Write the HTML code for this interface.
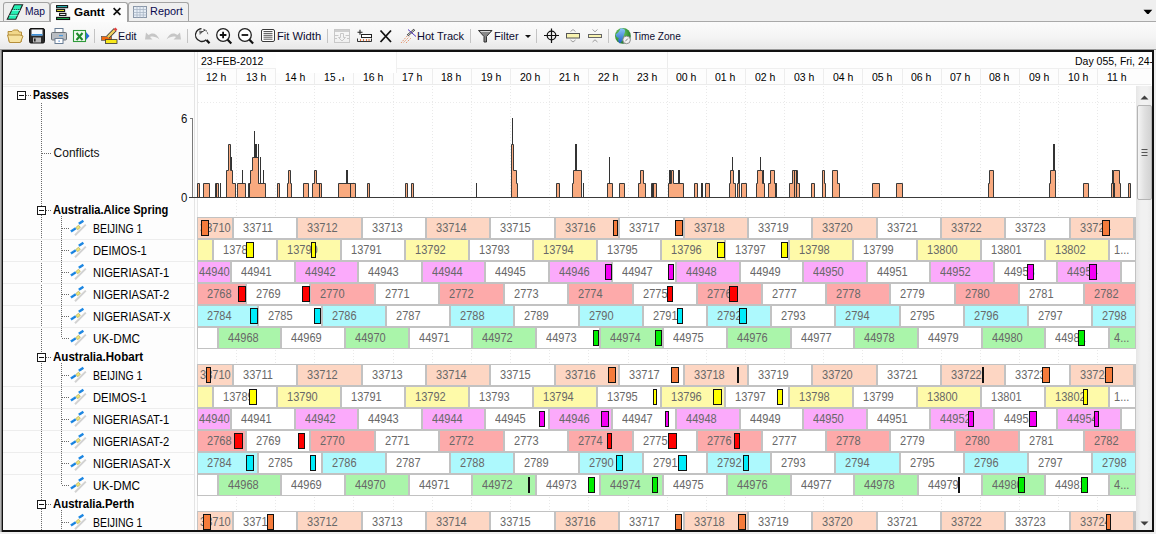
<!DOCTYPE html><html><head><meta charset="utf-8"><style>
html,body{margin:0;padding:0;}
body{width:1156px;height:534px;position:relative;overflow:hidden;background:#ececec;font-family:"Liberation Sans",sans-serif;}
.t{position:absolute;white-space:nowrap;line-height:1;}
svg{position:absolute;left:0;top:0;}
.sg{position:absolute;box-sizing:border-box;border:1px solid #c2c2c2;height:22px;overflow:hidden;}
.sg span{position:absolute;top:3px;font-size:12.6px;color:#686868;line-height:15px;white-space:nowrap;transform:scaleX(0.875);transform-origin:0 0;}
.mk{position:absolute;box-sizing:border-box;border:1.5px solid #111;height:16px;}
</style></head><body>
<div style="position:absolute;left:0px;top:0px;width:1156px;height:21px;background:#efefef;"></div>
<div style="position:absolute;left:0px;top:21px;width:1156px;height:1px;background:#a9a9a9;"></div>
<div style="position:absolute;left:3px;top:2px;width:47px;height:19px;box-sizing:border-box;border:1px solid #a3a3a3;border-bottom:none;border-radius:3px 3px 0 0;background:#efefef;"></div>
<div style="position:absolute;left:128px;top:2px;width:61px;height:19px;box-sizing:border-box;border:1px solid #a3a3a3;border-bottom:none;border-radius:3px 3px 0 0;background:#efefef;"></div>
<div style="position:absolute;left:50px;top:2px;width:78px;height:20px;box-sizing:border-box;border:1px solid #a3a3a3;border-bottom:none;border-radius:3px 3px 0 0;background:#fcfcfc;"></div>
<div style="position:absolute;left:0px;top:22px;width:1156px;height:26px;background:linear-gradient(#fbfbfb,#f4f4f4 60%,#e9e9e9);"></div>
<div style="position:absolute;left:0px;top:48px;width:1156px;height:1px;background:#ececec;"></div>
<div style="position:absolute;left:0px;top:49px;width:1156px;height:1px;background:#9a9a9a;"></div>
<div style="position:absolute;left:0px;top:50px;width:1156px;height:484px;background:#efefef;"></div>
<div style="position:absolute;left:2px;top:50px;width:1152px;height:482px;background:#fdfdfd;"></div>
<div style="position:absolute;left:3px;top:52px;width:191px;height:32px;background:#fbfbfb;"></div>
<div style="position:absolute;left:3px;top:84px;width:191px;height:1px;background:#ececec;"></div>
<div style="position:absolute;left:3px;top:86px;width:191px;height:1px;background:#efefef;"></div>
<div style="position:absolute;left:194px;top:52px;width:1px;height:480px;background:#e4e4e4;"></div>
<div style="position:absolute;left:197px;top:52px;width:1px;height:480px;background:#e8e8e8;"></div>
<div style="position:absolute;left:198px;top:52px;width:953px;height:16px;background:#fefefe;"></div>
<div style="position:absolute;left:198px;top:68px;width:953px;height:1px;background:#efefef;"></div>
<div style="position:absolute;left:198px;top:84px;width:953px;height:1px;background:#ebebeb;"></div>
<div style="position:absolute;left:198px;top:85px;width:938px;height:446px;background:#ffffff;"></div>
<div style="position:absolute;left:236px;top:86px;width:1px;height:445px;background:repeating-linear-gradient(#e9e9e9 0 1px,transparent 1px 3px)"></div>
<div style="position:absolute;left:275px;top:86px;width:1px;height:445px;background:repeating-linear-gradient(#e9e9e9 0 1px,transparent 1px 3px)"></div>
<div style="position:absolute;left:314px;top:86px;width:1px;height:445px;background:repeating-linear-gradient(#e9e9e9 0 1px,transparent 1px 3px)"></div>
<div style="position:absolute;left:353px;top:86px;width:1px;height:445px;background:repeating-linear-gradient(#e9e9e9 0 1px,transparent 1px 3px)"></div>
<div style="position:absolute;left:393px;top:86px;width:1px;height:445px;background:repeating-linear-gradient(#e9e9e9 0 1px,transparent 1px 3px)"></div>
<div style="position:absolute;left:432px;top:86px;width:1px;height:445px;background:repeating-linear-gradient(#e9e9e9 0 1px,transparent 1px 3px)"></div>
<div style="position:absolute;left:471px;top:86px;width:1px;height:445px;background:repeating-linear-gradient(#e9e9e9 0 1px,transparent 1px 3px)"></div>
<div style="position:absolute;left:510px;top:86px;width:1px;height:445px;background:repeating-linear-gradient(#e9e9e9 0 1px,transparent 1px 3px)"></div>
<div style="position:absolute;left:549px;top:86px;width:1px;height:445px;background:repeating-linear-gradient(#e9e9e9 0 1px,transparent 1px 3px)"></div>
<div style="position:absolute;left:588px;top:86px;width:1px;height:445px;background:repeating-linear-gradient(#e9e9e9 0 1px,transparent 1px 3px)"></div>
<div style="position:absolute;left:628px;top:86px;width:1px;height:445px;background:repeating-linear-gradient(#e9e9e9 0 1px,transparent 1px 3px)"></div>
<div style="position:absolute;left:667px;top:86px;width:1px;height:445px;background:repeating-linear-gradient(#e9e9e9 0 1px,transparent 1px 3px)"></div>
<div style="position:absolute;left:706px;top:86px;width:1px;height:445px;background:repeating-linear-gradient(#e9e9e9 0 1px,transparent 1px 3px)"></div>
<div style="position:absolute;left:745px;top:86px;width:1px;height:445px;background:repeating-linear-gradient(#e9e9e9 0 1px,transparent 1px 3px)"></div>
<div style="position:absolute;left:784px;top:86px;width:1px;height:445px;background:repeating-linear-gradient(#e9e9e9 0 1px,transparent 1px 3px)"></div>
<div style="position:absolute;left:823px;top:86px;width:1px;height:445px;background:repeating-linear-gradient(#e9e9e9 0 1px,transparent 1px 3px)"></div>
<div style="position:absolute;left:862px;top:86px;width:1px;height:445px;background:repeating-linear-gradient(#e9e9e9 0 1px,transparent 1px 3px)"></div>
<div style="position:absolute;left:902px;top:86px;width:1px;height:445px;background:repeating-linear-gradient(#e9e9e9 0 1px,transparent 1px 3px)"></div>
<div style="position:absolute;left:941px;top:86px;width:1px;height:445px;background:repeating-linear-gradient(#e9e9e9 0 1px,transparent 1px 3px)"></div>
<div style="position:absolute;left:980px;top:86px;width:1px;height:445px;background:repeating-linear-gradient(#e9e9e9 0 1px,transparent 1px 3px)"></div>
<div style="position:absolute;left:1019px;top:86px;width:1px;height:445px;background:repeating-linear-gradient(#e9e9e9 0 1px,transparent 1px 3px)"></div>
<div style="position:absolute;left:1058px;top:86px;width:1px;height:445px;background:repeating-linear-gradient(#e9e9e9 0 1px,transparent 1px 3px)"></div>
<div style="position:absolute;left:1097px;top:86px;width:1px;height:445px;background:repeating-linear-gradient(#e9e9e9 0 1px,transparent 1px 3px)"></div>
<div style="position:absolute;left:198px;top:102px;width:938px;height:1px;background:repeating-linear-gradient(90deg,#ebebeb 0 1px,transparent 1px 3px)"></div>
<div style="position:absolute;left:198px;top:52px;width:954px;height:33px;overflow:hidden">
<div class="t" style="left:8.45px;top:20.01px;font-size:10.6px;color:#000;font-weight:400;transform:scaleX(0.990);transform-origin:0 0;">12 h</div>
<div style="position:absolute;left:38px;top:17px;width:1px;height:15px;background:#ededed;"></div>
<div class="t" style="left:47.60px;top:20.01px;font-size:10.6px;color:#000;font-weight:400;transform:scaleX(0.990);transform-origin:0 0;">13 h</div>
<div style="position:absolute;left:77px;top:17px;width:1px;height:15px;background:#ededed;"></div>
<div class="t" style="left:86.75px;top:20.01px;font-size:10.6px;color:#000;font-weight:400;transform:scaleX(0.990);transform-origin:0 0;">14 h</div>
<div style="position:absolute;left:116px;top:17px;width:1px;height:15px;background:#ededed;"></div>
<div class="t" style="left:125.90px;top:20.01px;font-size:10.6px;color:#000;font-weight:400;transform:scaleX(0.990);transform-origin:0 0;">15 h</div>
<div style="position:absolute;left:155px;top:17px;width:1px;height:15px;background:#ededed;"></div>
<div class="t" style="left:165.05px;top:20.01px;font-size:10.6px;color:#000;font-weight:400;transform:scaleX(0.990);transform-origin:0 0;">16 h</div>
<div style="position:absolute;left:195px;top:17px;width:1px;height:15px;background:#ededed;"></div>
<div class="t" style="left:204.20px;top:20.01px;font-size:10.6px;color:#000;font-weight:400;transform:scaleX(0.990);transform-origin:0 0;">17 h</div>
<div style="position:absolute;left:234px;top:17px;width:1px;height:15px;background:#ededed;"></div>
<div class="t" style="left:243.35px;top:20.01px;font-size:10.6px;color:#000;font-weight:400;transform:scaleX(0.990);transform-origin:0 0;">18 h</div>
<div style="position:absolute;left:273px;top:17px;width:1px;height:15px;background:#ededed;"></div>
<div class="t" style="left:282.50px;top:20.01px;font-size:10.6px;color:#000;font-weight:400;transform:scaleX(0.990);transform-origin:0 0;">19 h</div>
<div style="position:absolute;left:312px;top:17px;width:1px;height:15px;background:#ededed;"></div>
<div class="t" style="left:321.65px;top:20.01px;font-size:10.6px;color:#000;font-weight:400;transform:scaleX(0.990);transform-origin:0 0;">20 h</div>
<div style="position:absolute;left:351px;top:17px;width:1px;height:15px;background:#ededed;"></div>
<div class="t" style="left:360.80px;top:20.01px;font-size:10.6px;color:#000;font-weight:400;transform:scaleX(0.990);transform-origin:0 0;">21 h</div>
<div style="position:absolute;left:390px;top:17px;width:1px;height:15px;background:#ededed;"></div>
<div class="t" style="left:399.95px;top:20.01px;font-size:10.6px;color:#000;font-weight:400;transform:scaleX(0.990);transform-origin:0 0;">22 h</div>
<div style="position:absolute;left:430px;top:17px;width:1px;height:15px;background:#ededed;"></div>
<div class="t" style="left:439.10px;top:20.01px;font-size:10.6px;color:#000;font-weight:400;transform:scaleX(0.990);transform-origin:0 0;">23 h</div>
<div style="position:absolute;left:469px;top:17px;width:1px;height:15px;background:#ededed;"></div>
<div class="t" style="left:478.25px;top:20.01px;font-size:10.6px;color:#000;font-weight:400;transform:scaleX(0.990);transform-origin:0 0;">00 h</div>
<div style="position:absolute;left:508px;top:17px;width:1px;height:15px;background:#ededed;"></div>
<div class="t" style="left:517.40px;top:20.01px;font-size:10.6px;color:#000;font-weight:400;transform:scaleX(0.990);transform-origin:0 0;">01 h</div>
<div style="position:absolute;left:547px;top:17px;width:1px;height:15px;background:#ededed;"></div>
<div class="t" style="left:556.55px;top:20.01px;font-size:10.6px;color:#000;font-weight:400;transform:scaleX(0.990);transform-origin:0 0;">02 h</div>
<div style="position:absolute;left:586px;top:17px;width:1px;height:15px;background:#ededed;"></div>
<div class="t" style="left:595.70px;top:20.01px;font-size:10.6px;color:#000;font-weight:400;transform:scaleX(0.990);transform-origin:0 0;">03 h</div>
<div style="position:absolute;left:625px;top:17px;width:1px;height:15px;background:#ededed;"></div>
<div class="t" style="left:634.85px;top:20.01px;font-size:10.6px;color:#000;font-weight:400;transform:scaleX(0.990);transform-origin:0 0;">04 h</div>
<div style="position:absolute;left:664px;top:17px;width:1px;height:15px;background:#ededed;"></div>
<div class="t" style="left:674.00px;top:20.01px;font-size:10.6px;color:#000;font-weight:400;transform:scaleX(0.990);transform-origin:0 0;">05 h</div>
<div style="position:absolute;left:704px;top:17px;width:1px;height:15px;background:#ededed;"></div>
<div class="t" style="left:713.15px;top:20.01px;font-size:10.6px;color:#000;font-weight:400;transform:scaleX(0.990);transform-origin:0 0;">06 h</div>
<div style="position:absolute;left:743px;top:17px;width:1px;height:15px;background:#ededed;"></div>
<div class="t" style="left:752.30px;top:20.01px;font-size:10.6px;color:#000;font-weight:400;transform:scaleX(0.990);transform-origin:0 0;">07 h</div>
<div style="position:absolute;left:782px;top:17px;width:1px;height:15px;background:#ededed;"></div>
<div class="t" style="left:791.45px;top:20.01px;font-size:10.6px;color:#000;font-weight:400;transform:scaleX(0.990);transform-origin:0 0;">08 h</div>
<div style="position:absolute;left:821px;top:17px;width:1px;height:15px;background:#ededed;"></div>
<div class="t" style="left:830.60px;top:20.01px;font-size:10.6px;color:#000;font-weight:400;transform:scaleX(0.990);transform-origin:0 0;">09 h</div>
<div style="position:absolute;left:860px;top:17px;width:1px;height:15px;background:#ededed;"></div>
<div class="t" style="left:869.75px;top:20.01px;font-size:10.6px;color:#000;font-weight:400;transform:scaleX(0.990);transform-origin:0 0;">10 h</div>
<div style="position:absolute;left:899px;top:17px;width:1px;height:15px;background:#ededed;"></div>
<div class="t" style="left:908.90px;top:20.01px;font-size:10.6px;color:#000;font-weight:400;transform:scaleX(0.990);transform-origin:0 0;">11 h</div>
<div class="t" style="left:3.20px;top:4.21px;font-size:10.6px;color:#000;font-weight:400;transform:scaleX(0.990);transform-origin:0 0;">23-FEB-2012</div>
<div style="position:absolute;left:78px;top:0px;width:1px;height:16px;background:#ececec;"></div>
<div class="t" style="left:876.50px;top:4.21px;font-size:10.6px;color:#000;font-weight:400;transform:scaleX(0.990);transform-origin:0 0;">Day 055, Fri, 24-FEB-2012</div>
<div style="position:absolute;left:78px;top:0px;width:120px;height:21px;background:#ffffff;"></div>
<div style="position:absolute;left:198px;top:0px;width:1px;height:21px;background:#f0f0f0;"></div>
<div style="position:absolute;left:469px;top:0px;width:1px;height:16px;background:#ececec;"></div>
<div style="position:absolute;left:130px;top:23px;width:3px;height:3px;background:#ffffff;"></div>
<div style="position:absolute;left:140px;top:21px;width:3px;height:6px;background:#ffffff;"></div>
<div style="position:absolute;left:143px;top:21px;width:4px;height:4px;background:#ffffff;"></div>
</div>
<div style="position:absolute;left:0;top:0;width:1156px;height:531px;overflow:hidden">
<div class="sg" style="left:197px;top:217px;width:36px;background:#fdd6c3"><span style="left:1.9px">33710</span></div>
<div class="sg" style="left:233px;top:217px;width:64px;background:#ffffff"><span style="left:9.0px">33711</span></div>
<div class="sg" style="left:297px;top:217px;width:65px;background:#fdd6c3"><span style="left:9.0px">33712</span></div>
<div class="sg" style="left:362px;top:217px;width:64px;background:#ffffff"><span style="left:9.0px">33713</span></div>
<div class="sg" style="left:426px;top:217px;width:64px;background:#fdd6c3"><span style="left:9.0px">33714</span></div>
<div class="sg" style="left:490px;top:217px;width:65px;background:#ffffff"><span style="left:9.0px">33715</span></div>
<div class="sg" style="left:555px;top:217px;width:64px;background:#fdd6c3"><span style="left:9.0px">33716</span></div>
<div class="sg" style="left:619px;top:217px;width:65px;background:#ffffff"><span style="left:9.0px">33717</span></div>
<div class="sg" style="left:684px;top:217px;width:64px;background:#fdd6c3"><span style="left:9.0px">33718</span></div>
<div class="sg" style="left:748px;top:217px;width:64px;background:#ffffff"><span style="left:9.0px">33719</span></div>
<div class="sg" style="left:812px;top:217px;width:65px;background:#fdd6c3"><span style="left:9.0px">33720</span></div>
<div class="sg" style="left:877px;top:217px;width:64px;background:#ffffff"><span style="left:9.0px">33721</span></div>
<div class="sg" style="left:941px;top:217px;width:64px;background:#fdd6c3"><span style="left:9.0px">33722</span></div>
<div class="sg" style="left:1005px;top:217px;width:65px;background:#ffffff"><span style="left:9.0px">33723</span></div>
<div class="sg" style="left:1070px;top:217px;width:64px;background:#fdd6c3"><span style="left:9.0px">33724</span></div>
<div class="sg" style="left:1134px;top:217px;width:2px;background:#ffffff"></div>
<div class="mk" style="left:201px;top:220px;width:8px;background:#f57b3b"></div>
<div class="mk" style="left:613px;top:220px;width:5px;background:#f57b3b"></div>
<div class="mk" style="left:675px;top:220px;width:8px;background:#f57b3b"></div>
<div class="mk" style="left:1102px;top:220px;width:8px;background:#f57b3b"></div>
<div class="sg" style="left:197px;top:239px;width:16px;background:#fefaa9"></div>
<div class="sg" style="left:213px;top:239px;width:64px;background:#ffffff"><span style="left:9.0px">13789</span></div>
<div class="sg" style="left:277px;top:239px;width:64px;background:#fefaa9"><span style="left:9.0px">13790</span></div>
<div class="sg" style="left:341px;top:239px;width:64px;background:#ffffff"><span style="left:9.0px">13791</span></div>
<div class="sg" style="left:405px;top:239px;width:64px;background:#fefaa9"><span style="left:9.0px">13792</span></div>
<div class="sg" style="left:469px;top:239px;width:64px;background:#ffffff"><span style="left:9.0px">13793</span></div>
<div class="sg" style="left:533px;top:239px;width:64px;background:#fefaa9"><span style="left:9.0px">13794</span></div>
<div class="sg" style="left:597px;top:239px;width:64px;background:#ffffff"><span style="left:9.0px">13795</span></div>
<div class="sg" style="left:661px;top:239px;width:64px;background:#fefaa9"><span style="left:9.0px">13796</span></div>
<div class="sg" style="left:725px;top:239px;width:64px;background:#ffffff"><span style="left:9.0px">13797</span></div>
<div class="sg" style="left:789px;top:239px;width:64px;background:#fefaa9"><span style="left:9.0px">13798</span></div>
<div class="sg" style="left:853px;top:239px;width:64px;background:#ffffff"><span style="left:9.0px">13799</span></div>
<div class="sg" style="left:917px;top:239px;width:64px;background:#fefaa9"><span style="left:9.0px">13800</span></div>
<div class="sg" style="left:981px;top:239px;width:64px;background:#ffffff"><span style="left:9.0px">13801</span></div>
<div class="sg" style="left:1045px;top:239px;width:64px;background:#fefaa9"><span style="left:9.0px">13802</span></div>
<div class="sg" style="left:1109px;top:239px;width:27px;background:#ffffff"><span style="left:4.0px">1...</span></div>
<div class="mk" style="left:246px;top:242px;width:8px;background:#ffff00"></div>
<div class="mk" style="left:311px;top:242px;width:5px;background:#ffff00"></div>
<div class="mk" style="left:717px;top:242px;width:8px;background:#ffff00"></div>
<div class="mk" style="left:781px;top:242px;width:7px;background:#ffff00"></div>
<div class="sg" style="left:197px;top:261px;width:34px;background:#fbaafb"><span style="left:0.9px">44940</span></div>
<div class="sg" style="left:231px;top:261px;width:64px;background:#ffffff"><span style="left:9.0px">44941</span></div>
<div class="sg" style="left:295px;top:261px;width:63px;background:#fbaafb"><span style="left:9.0px">44942</span></div>
<div class="sg" style="left:358px;top:261px;width:64px;background:#ffffff"><span style="left:9.0px">44943</span></div>
<div class="sg" style="left:422px;top:261px;width:63px;background:#fbaafb"><span style="left:9.0px">44944</span></div>
<div class="sg" style="left:485px;top:261px;width:64px;background:#ffffff"><span style="left:9.0px">44945</span></div>
<div class="sg" style="left:549px;top:261px;width:63px;background:#fbaafb"><span style="left:9.0px">44946</span></div>
<div class="sg" style="left:612px;top:261px;width:64px;background:#ffffff"><span style="left:9.0px">44947</span></div>
<div class="sg" style="left:676px;top:261px;width:64px;background:#fbaafb"><span style="left:9.0px">44948</span></div>
<div class="sg" style="left:740px;top:261px;width:63px;background:#ffffff"><span style="left:9.0px">44949</span></div>
<div class="sg" style="left:803px;top:261px;width:64px;background:#fbaafb"><span style="left:9.0px">44950</span></div>
<div class="sg" style="left:867px;top:261px;width:63px;background:#ffffff"><span style="left:9.0px">44951</span></div>
<div class="sg" style="left:930px;top:261px;width:64px;background:#fbaafb"><span style="left:9.0px">44952</span></div>
<div class="sg" style="left:994px;top:261px;width:63px;background:#ffffff"><span style="left:9.0px">44953</span></div>
<div class="sg" style="left:1057px;top:261px;width:64px;background:#fbaafb"><span style="left:9.0px">44954</span></div>
<div class="sg" style="left:1121px;top:261px;width:15px;background:#ffffff"></div>
<div class="mk" style="left:605px;top:264px;width:7px;background:#f400f4"></div>
<div class="mk" style="left:668px;top:264px;width:6px;background:#f400f4"></div>
<div class="mk" style="left:1027px;top:264px;width:7px;background:#f400f4"></div>
<div class="mk" style="left:1089px;top:264px;width:8px;background:#f400f4"></div>
<div class="sg" style="left:197px;top:283px;width:49px;background:#fdaaaa"><span style="left:9.0px">2768</span></div>
<div class="sg" style="left:246px;top:283px;width:64px;background:#ffffff"><span style="left:9.0px">2769</span></div>
<div class="sg" style="left:310px;top:283px;width:65px;background:#fdaaaa"><span style="left:9.0px">2770</span></div>
<div class="sg" style="left:375px;top:283px;width:64px;background:#ffffff"><span style="left:9.0px">2771</span></div>
<div class="sg" style="left:439px;top:283px;width:65px;background:#fdaaaa"><span style="left:9.0px">2772</span></div>
<div class="sg" style="left:504px;top:283px;width:64px;background:#ffffff"><span style="left:9.0px">2773</span></div>
<div class="sg" style="left:568px;top:283px;width:65px;background:#fdaaaa"><span style="left:9.0px">2774</span></div>
<div class="sg" style="left:633px;top:283px;width:64px;background:#ffffff"><span style="left:9.0px">2775</span></div>
<div class="sg" style="left:697px;top:283px;width:65px;background:#fdaaaa"><span style="left:9.0px">2776</span></div>
<div class="sg" style="left:762px;top:283px;width:64px;background:#ffffff"><span style="left:9.0px">2777</span></div>
<div class="sg" style="left:826px;top:283px;width:64px;background:#fdaaaa"><span style="left:9.0px">2778</span></div>
<div class="sg" style="left:890px;top:283px;width:65px;background:#ffffff"><span style="left:9.0px">2779</span></div>
<div class="sg" style="left:955px;top:283px;width:64px;background:#fdaaaa"><span style="left:9.0px">2780</span></div>
<div class="sg" style="left:1019px;top:283px;width:65px;background:#ffffff"><span style="left:9.0px">2781</span></div>
<div class="sg" style="left:1084px;top:283px;width:52px;background:#fdaaaa"><span style="left:9.0px">2782</span></div>
<div class="mk" style="left:238px;top:286px;width:8px;background:#ff0000"></div>
<div class="mk" style="left:302px;top:286px;width:8px;background:#ff0000"></div>
<div class="mk" style="left:667px;top:286px;width:6px;background:#ff0000"></div>
<div class="mk" style="left:729px;top:286px;width:9px;background:#ff0000"></div>
<div class="sg" style="left:197px;top:305px;width:61px;background:#adf9fd"><span style="left:9.0px">2784</span></div>
<div class="sg" style="left:258px;top:305px;width:64px;background:#ffffff"><span style="left:9.0px">2785</span></div>
<div class="sg" style="left:322px;top:305px;width:64px;background:#adf9fd"><span style="left:9.0px">2786</span></div>
<div class="sg" style="left:386px;top:305px;width:64px;background:#ffffff"><span style="left:9.0px">2787</span></div>
<div class="sg" style="left:450px;top:305px;width:64px;background:#adf9fd"><span style="left:9.0px">2788</span></div>
<div class="sg" style="left:514px;top:305px;width:65px;background:#ffffff"><span style="left:9.0px">2789</span></div>
<div class="sg" style="left:579px;top:305px;width:64px;background:#adf9fd"><span style="left:9.0px">2790</span></div>
<div class="sg" style="left:643px;top:305px;width:64px;background:#ffffff"><span style="left:9.0px">2791</span></div>
<div class="sg" style="left:707px;top:305px;width:64px;background:#adf9fd"><span style="left:9.0px">2792</span></div>
<div class="sg" style="left:771px;top:305px;width:64px;background:#ffffff"><span style="left:9.0px">2793</span></div>
<div class="sg" style="left:835px;top:305px;width:65px;background:#adf9fd"><span style="left:9.0px">2794</span></div>
<div class="sg" style="left:900px;top:305px;width:64px;background:#ffffff"><span style="left:9.0px">2795</span></div>
<div class="sg" style="left:964px;top:305px;width:64px;background:#adf9fd"><span style="left:9.0px">2796</span></div>
<div class="sg" style="left:1028px;top:305px;width:64px;background:#ffffff"><span style="left:9.0px">2797</span></div>
<div class="sg" style="left:1092px;top:305px;width:44px;background:#adf9fd"><span style="left:9.0px">2798</span></div>
<div class="mk" style="left:250px;top:308px;width:8px;background:#00ecfa"></div>
<div class="mk" style="left:314px;top:308px;width:7px;background:#00ecfa"></div>
<div class="mk" style="left:677px;top:308px;width:6px;background:#00ecfa"></div>
<div class="mk" style="left:739px;top:308px;width:8px;background:#00ecfa"></div>
<div class="sg" style="left:197px;top:327px;width:21px;background:#ffffff"></div>
<div class="sg" style="left:218px;top:327px;width:63px;background:#aaf5aa"><span style="left:9.0px">44968</span></div>
<div class="sg" style="left:281px;top:327px;width:64px;background:#ffffff"><span style="left:9.0px">44969</span></div>
<div class="sg" style="left:345px;top:327px;width:64px;background:#aaf5aa"><span style="left:9.0px">44970</span></div>
<div class="sg" style="left:409px;top:327px;width:63px;background:#ffffff"><span style="left:9.0px">44971</span></div>
<div class="sg" style="left:472px;top:327px;width:64px;background:#aaf5aa"><span style="left:9.0px">44972</span></div>
<div class="sg" style="left:536px;top:327px;width:64px;background:#ffffff"><span style="left:9.0px">44973</span></div>
<div class="sg" style="left:600px;top:327px;width:63px;background:#aaf5aa"><span style="left:9.0px">44974</span></div>
<div class="sg" style="left:663px;top:327px;width:64px;background:#ffffff"><span style="left:9.0px">44975</span></div>
<div class="sg" style="left:727px;top:327px;width:64px;background:#aaf5aa"><span style="left:9.0px">44976</span></div>
<div class="sg" style="left:791px;top:327px;width:63px;background:#ffffff"><span style="left:9.0px">44977</span></div>
<div class="sg" style="left:854px;top:327px;width:64px;background:#aaf5aa"><span style="left:9.0px">44978</span></div>
<div class="sg" style="left:918px;top:327px;width:64px;background:#ffffff"><span style="left:9.0px">44979</span></div>
<div class="sg" style="left:982px;top:327px;width:63px;background:#aaf5aa"><span style="left:9.0px">44980</span></div>
<div class="sg" style="left:1045px;top:327px;width:64px;background:#ffffff"><span style="left:9.0px">44981</span></div>
<div class="sg" style="left:1109px;top:327px;width:27px;background:#aaf5aa"><span style="left:4.0px">4...</span></div>
<div class="mk" style="left:593px;top:330px;width:6px;background:#00ee00"></div>
<div class="mk" style="left:655px;top:330px;width:7px;background:#00ee00"></div>
<div class="mk" style="left:1078px;top:330px;width:7px;background:#00ee00"></div>
<div class="sg" style="left:197px;top:364px;width:36px;background:#fdd6c3"><span style="left:1.9px">33710</span></div>
<div class="sg" style="left:233px;top:364px;width:64px;background:#ffffff"><span style="left:9.0px">33711</span></div>
<div class="sg" style="left:297px;top:364px;width:65px;background:#fdd6c3"><span style="left:9.0px">33712</span></div>
<div class="sg" style="left:362px;top:364px;width:64px;background:#ffffff"><span style="left:9.0px">33713</span></div>
<div class="sg" style="left:426px;top:364px;width:64px;background:#fdd6c3"><span style="left:9.0px">33714</span></div>
<div class="sg" style="left:490px;top:364px;width:65px;background:#ffffff"><span style="left:9.0px">33715</span></div>
<div class="sg" style="left:555px;top:364px;width:64px;background:#fdd6c3"><span style="left:9.0px">33716</span></div>
<div class="sg" style="left:619px;top:364px;width:65px;background:#ffffff"><span style="left:9.0px">33717</span></div>
<div class="sg" style="left:684px;top:364px;width:64px;background:#fdd6c3"><span style="left:9.0px">33718</span></div>
<div class="sg" style="left:748px;top:364px;width:64px;background:#ffffff"><span style="left:9.0px">33719</span></div>
<div class="sg" style="left:812px;top:364px;width:65px;background:#fdd6c3"><span style="left:9.0px">33720</span></div>
<div class="sg" style="left:877px;top:364px;width:64px;background:#ffffff"><span style="left:9.0px">33721</span></div>
<div class="sg" style="left:941px;top:364px;width:64px;background:#fdd6c3"><span style="left:9.0px">33722</span></div>
<div class="sg" style="left:1005px;top:364px;width:65px;background:#ffffff"><span style="left:9.0px">33723</span></div>
<div class="sg" style="left:1070px;top:364px;width:64px;background:#fdd6c3"><span style="left:9.0px">33724</span></div>
<div class="sg" style="left:1134px;top:364px;width:2px;background:#ffffff"></div>
<div class="mk" style="left:206px;top:367px;width:5px;background:#f57b3b"></div>
<div class="mk" style="left:608px;top:367px;width:8px;background:#f57b3b"></div>
<div class="mk" style="left:671px;top:367px;width:8px;background:#f57b3b"></div>
<div style="position:absolute;left:737px;top:367px;width:2px;height:16px;background:#111;"></div>
<div style="position:absolute;left:982px;top:367px;width:2px;height:16px;background:#111;"></div>
<div class="mk" style="left:1042px;top:367px;width:8px;background:#f57b3b"></div>
<div class="mk" style="left:1105px;top:367px;width:8px;background:#f57b3b"></div>
<div class="sg" style="left:197px;top:386px;width:16px;background:#fefaa9"></div>
<div class="sg" style="left:213px;top:386px;width:64px;background:#ffffff"><span style="left:9.0px">13789</span></div>
<div class="sg" style="left:277px;top:386px;width:64px;background:#fefaa9"><span style="left:9.0px">13790</span></div>
<div class="sg" style="left:341px;top:386px;width:64px;background:#ffffff"><span style="left:9.0px">13791</span></div>
<div class="sg" style="left:405px;top:386px;width:64px;background:#fefaa9"><span style="left:9.0px">13792</span></div>
<div class="sg" style="left:469px;top:386px;width:64px;background:#ffffff"><span style="left:9.0px">13793</span></div>
<div class="sg" style="left:533px;top:386px;width:64px;background:#fefaa9"><span style="left:9.0px">13794</span></div>
<div class="sg" style="left:597px;top:386px;width:64px;background:#ffffff"><span style="left:9.0px">13795</span></div>
<div class="sg" style="left:661px;top:386px;width:64px;background:#fefaa9"><span style="left:9.0px">13796</span></div>
<div class="sg" style="left:725px;top:386px;width:64px;background:#ffffff"><span style="left:9.0px">13797</span></div>
<div class="sg" style="left:789px;top:386px;width:64px;background:#fefaa9"><span style="left:9.0px">13798</span></div>
<div class="sg" style="left:853px;top:386px;width:64px;background:#ffffff"><span style="left:9.0px">13799</span></div>
<div class="sg" style="left:917px;top:386px;width:64px;background:#fefaa9"><span style="left:9.0px">13800</span></div>
<div class="sg" style="left:981px;top:386px;width:64px;background:#ffffff"><span style="left:9.0px">13801</span></div>
<div class="sg" style="left:1045px;top:386px;width:64px;background:#fefaa9"><span style="left:9.0px">13802</span></div>
<div class="sg" style="left:1109px;top:386px;width:27px;background:#ffffff"><span style="left:4.0px">1...</span></div>
<div class="mk" style="left:249px;top:389px;width:8px;background:#ffff00"></div>
<div class="mk" style="left:653px;top:389px;width:4px;background:#ffff00"></div>
<div class="mk" style="left:713px;top:389px;width:9px;background:#ffff00"></div>
<div class="mk" style="left:777px;top:389px;width:6px;background:#ffff00"></div>
<div class="mk" style="left:1083px;top:389px;width:5px;background:#ffff00"></div>
<div class="sg" style="left:197px;top:408px;width:34px;background:#fbaafb"><span style="left:0.9px">44940</span></div>
<div class="sg" style="left:231px;top:408px;width:64px;background:#ffffff"><span style="left:9.0px">44941</span></div>
<div class="sg" style="left:295px;top:408px;width:63px;background:#fbaafb"><span style="left:9.0px">44942</span></div>
<div class="sg" style="left:358px;top:408px;width:64px;background:#ffffff"><span style="left:9.0px">44943</span></div>
<div class="sg" style="left:422px;top:408px;width:63px;background:#fbaafb"><span style="left:9.0px">44944</span></div>
<div class="sg" style="left:485px;top:408px;width:64px;background:#ffffff"><span style="left:9.0px">44945</span></div>
<div class="sg" style="left:549px;top:408px;width:63px;background:#fbaafb"><span style="left:9.0px">44946</span></div>
<div class="sg" style="left:612px;top:408px;width:64px;background:#ffffff"><span style="left:9.0px">44947</span></div>
<div class="sg" style="left:676px;top:408px;width:64px;background:#fbaafb"><span style="left:9.0px">44948</span></div>
<div class="sg" style="left:740px;top:408px;width:63px;background:#ffffff"><span style="left:9.0px">44949</span></div>
<div class="sg" style="left:803px;top:408px;width:64px;background:#fbaafb"><span style="left:9.0px">44950</span></div>
<div class="sg" style="left:867px;top:408px;width:63px;background:#ffffff"><span style="left:9.0px">44951</span></div>
<div class="sg" style="left:930px;top:408px;width:64px;background:#fbaafb"><span style="left:9.0px">44952</span></div>
<div class="sg" style="left:994px;top:408px;width:63px;background:#ffffff"><span style="left:9.0px">44953</span></div>
<div class="sg" style="left:1057px;top:408px;width:64px;background:#fbaafb"><span style="left:9.0px">44954</span></div>
<div class="sg" style="left:1121px;top:408px;width:15px;background:#ffffff"></div>
<div class="mk" style="left:539px;top:411px;width:6px;background:#f400f4"></div>
<div class="mk" style="left:601px;top:411px;width:8px;background:#f400f4"></div>
<div class="mk" style="left:665px;top:411px;width:4px;background:#f400f4"></div>
<div class="mk" style="left:968px;top:411px;width:6px;background:#f400f4"></div>
<div class="mk" style="left:1029px;top:411px;width:8px;background:#f400f4"></div>
<div class="mk" style="left:1094px;top:411px;width:5px;background:#f400f4"></div>
<div class="sg" style="left:197px;top:430px;width:49px;background:#fdaaaa"><span style="left:9.0px">2768</span></div>
<div class="sg" style="left:246px;top:430px;width:64px;background:#ffffff"><span style="left:9.0px">2769</span></div>
<div class="sg" style="left:310px;top:430px;width:65px;background:#fdaaaa"><span style="left:9.0px">2770</span></div>
<div class="sg" style="left:375px;top:430px;width:64px;background:#ffffff"><span style="left:9.0px">2771</span></div>
<div class="sg" style="left:439px;top:430px;width:65px;background:#fdaaaa"><span style="left:9.0px">2772</span></div>
<div class="sg" style="left:504px;top:430px;width:64px;background:#ffffff"><span style="left:9.0px">2773</span></div>
<div class="sg" style="left:568px;top:430px;width:65px;background:#fdaaaa"><span style="left:9.0px">2774</span></div>
<div class="sg" style="left:633px;top:430px;width:64px;background:#ffffff"><span style="left:9.0px">2775</span></div>
<div class="sg" style="left:697px;top:430px;width:65px;background:#fdaaaa"><span style="left:9.0px">2776</span></div>
<div class="sg" style="left:762px;top:430px;width:64px;background:#ffffff"><span style="left:9.0px">2777</span></div>
<div class="sg" style="left:826px;top:430px;width:64px;background:#fdaaaa"><span style="left:9.0px">2778</span></div>
<div class="sg" style="left:890px;top:430px;width:65px;background:#ffffff"><span style="left:9.0px">2779</span></div>
<div class="sg" style="left:955px;top:430px;width:64px;background:#fdaaaa"><span style="left:9.0px">2780</span></div>
<div class="sg" style="left:1019px;top:430px;width:65px;background:#ffffff"><span style="left:9.0px">2781</span></div>
<div class="sg" style="left:1084px;top:430px;width:52px;background:#fdaaaa"><span style="left:9.0px">2782</span></div>
<div class="mk" style="left:234px;top:433px;width:9px;background:#ff0000"></div>
<div class="mk" style="left:298px;top:433px;width:7px;background:#ff0000"></div>
<div class="mk" style="left:607px;top:433px;width:5px;background:#ff0000"></div>
<div class="mk" style="left:668px;top:433px;width:9px;background:#ff0000"></div>
<div class="mk" style="left:734px;top:433px;width:6px;background:#ff0000"></div>
<div class="sg" style="left:197px;top:452px;width:61px;background:#adf9fd"><span style="left:9.0px">2784</span></div>
<div class="sg" style="left:258px;top:452px;width:64px;background:#ffffff"><span style="left:9.0px">2785</span></div>
<div class="sg" style="left:322px;top:452px;width:64px;background:#adf9fd"><span style="left:9.0px">2786</span></div>
<div class="sg" style="left:386px;top:452px;width:64px;background:#ffffff"><span style="left:9.0px">2787</span></div>
<div class="sg" style="left:450px;top:452px;width:64px;background:#adf9fd"><span style="left:9.0px">2788</span></div>
<div class="sg" style="left:514px;top:452px;width:65px;background:#ffffff"><span style="left:9.0px">2789</span></div>
<div class="sg" style="left:579px;top:452px;width:64px;background:#adf9fd"><span style="left:9.0px">2790</span></div>
<div class="sg" style="left:643px;top:452px;width:64px;background:#ffffff"><span style="left:9.0px">2791</span></div>
<div class="sg" style="left:707px;top:452px;width:64px;background:#adf9fd"><span style="left:9.0px">2792</span></div>
<div class="sg" style="left:771px;top:452px;width:64px;background:#ffffff"><span style="left:9.0px">2793</span></div>
<div class="sg" style="left:835px;top:452px;width:65px;background:#adf9fd"><span style="left:9.0px">2794</span></div>
<div class="sg" style="left:900px;top:452px;width:64px;background:#ffffff"><span style="left:9.0px">2795</span></div>
<div class="sg" style="left:964px;top:452px;width:64px;background:#adf9fd"><span style="left:9.0px">2796</span></div>
<div class="sg" style="left:1028px;top:452px;width:64px;background:#ffffff"><span style="left:9.0px">2797</span></div>
<div class="sg" style="left:1092px;top:452px;width:44px;background:#adf9fd"><span style="left:9.0px">2798</span></div>
<div class="mk" style="left:246px;top:455px;width:8px;background:#00ecfa"></div>
<div class="mk" style="left:310px;top:455px;width:6px;background:#00ecfa"></div>
<div class="mk" style="left:616px;top:455px;width:7px;background:#00ecfa"></div>
<div class="mk" style="left:678px;top:455px;width:9px;background:#00ecfa"></div>
<div class="mk" style="left:743px;top:455px;width:6px;background:#00ecfa"></div>
<div class="sg" style="left:197px;top:474px;width:21px;background:#ffffff"></div>
<div class="sg" style="left:218px;top:474px;width:63px;background:#aaf5aa"><span style="left:9.0px">44968</span></div>
<div class="sg" style="left:281px;top:474px;width:64px;background:#ffffff"><span style="left:9.0px">44969</span></div>
<div class="sg" style="left:345px;top:474px;width:64px;background:#aaf5aa"><span style="left:9.0px">44970</span></div>
<div class="sg" style="left:409px;top:474px;width:63px;background:#ffffff"><span style="left:9.0px">44971</span></div>
<div class="sg" style="left:472px;top:474px;width:64px;background:#aaf5aa"><span style="left:9.0px">44972</span></div>
<div class="sg" style="left:536px;top:474px;width:64px;background:#ffffff"><span style="left:9.0px">44973</span></div>
<div class="sg" style="left:600px;top:474px;width:63px;background:#aaf5aa"><span style="left:9.0px">44974</span></div>
<div class="sg" style="left:663px;top:474px;width:64px;background:#ffffff"><span style="left:9.0px">44975</span></div>
<div class="sg" style="left:727px;top:474px;width:64px;background:#aaf5aa"><span style="left:9.0px">44976</span></div>
<div class="sg" style="left:791px;top:474px;width:63px;background:#ffffff"><span style="left:9.0px">44977</span></div>
<div class="sg" style="left:854px;top:474px;width:64px;background:#aaf5aa"><span style="left:9.0px">44978</span></div>
<div class="sg" style="left:918px;top:474px;width:64px;background:#ffffff"><span style="left:9.0px">44979</span></div>
<div class="sg" style="left:982px;top:474px;width:63px;background:#aaf5aa"><span style="left:9.0px">44980</span></div>
<div class="sg" style="left:1045px;top:474px;width:64px;background:#ffffff"><span style="left:9.0px">44981</span></div>
<div class="sg" style="left:1109px;top:474px;width:27px;background:#aaf5aa"><span style="left:4.0px">4...</span></div>
<div style="position:absolute;left:528px;top:477px;width:2px;height:16px;background:#111;"></div>
<div class="mk" style="left:588px;top:477px;width:7px;background:#00ee00"></div>
<div class="mk" style="left:652px;top:477px;width:6px;background:#00ee00"></div>
<div style="position:absolute;left:958px;top:477px;width:2px;height:16px;background:#111;"></div>
<div class="mk" style="left:1018px;top:477px;width:7px;background:#00ee00"></div>
<div class="mk" style="left:1081px;top:477px;width:7px;background:#00ee00"></div>
<div class="sg" style="left:197px;top:511px;width:36px;background:#fdd6c3"><span style="left:1.9px">33710</span></div>
<div class="sg" style="left:233px;top:511px;width:64px;background:#ffffff"><span style="left:9.0px">33711</span></div>
<div class="sg" style="left:297px;top:511px;width:65px;background:#fdd6c3"><span style="left:9.0px">33712</span></div>
<div class="sg" style="left:362px;top:511px;width:64px;background:#ffffff"><span style="left:9.0px">33713</span></div>
<div class="sg" style="left:426px;top:511px;width:64px;background:#fdd6c3"><span style="left:9.0px">33714</span></div>
<div class="sg" style="left:490px;top:511px;width:65px;background:#ffffff"><span style="left:9.0px">33715</span></div>
<div class="sg" style="left:555px;top:511px;width:64px;background:#fdd6c3"><span style="left:9.0px">33716</span></div>
<div class="sg" style="left:619px;top:511px;width:65px;background:#ffffff"><span style="left:9.0px">33717</span></div>
<div class="sg" style="left:684px;top:511px;width:64px;background:#fdd6c3"><span style="left:9.0px">33718</span></div>
<div class="sg" style="left:748px;top:511px;width:64px;background:#ffffff"><span style="left:9.0px">33719</span></div>
<div class="sg" style="left:812px;top:511px;width:65px;background:#fdd6c3"><span style="left:9.0px">33720</span></div>
<div class="sg" style="left:877px;top:511px;width:64px;background:#ffffff"><span style="left:9.0px">33721</span></div>
<div class="sg" style="left:941px;top:511px;width:64px;background:#fdd6c3"><span style="left:9.0px">33722</span></div>
<div class="sg" style="left:1005px;top:511px;width:65px;background:#ffffff"><span style="left:9.0px">33723</span></div>
<div class="sg" style="left:1070px;top:511px;width:64px;background:#fdd6c3"><span style="left:9.0px">33724</span></div>
<div class="sg" style="left:1134px;top:511px;width:2px;background:#ffffff"></div>
<div class="mk" style="left:203px;top:514px;width:8px;background:#f57b3b"></div>
<div class="mk" style="left:267px;top:514px;width:7px;background:#f57b3b"></div>
<div class="mk" style="left:675px;top:514px;width:7px;background:#f57b3b"></div>
<div class="mk" style="left:738px;top:514px;width:8px;background:#f57b3b"></div>
<div class="mk" style="left:1106px;top:514px;width:5px;background:#f57b3b"></div>
</div>
<div style="position:absolute;left:3px;top:87px;width:191px;height:444px;background:#fdfdfd;"></div>
<div style="position:absolute;left:17px;top:91px;width:9px;height:9px;box-sizing:border-box;border:1px solid #1a1a1a;background:#fff"><div style="position:absolute;left:1px;top:3px;width:5px;height:1px;background:#111"></div></div>
<div style="position:absolute;left:26px;top:95px;width:6px;height:1px;background:repeating-linear-gradient(90deg,#6a6a6a 0 1px,transparent 1px 2px)"></div>
<div class="t" style="left:32.60px;top:88.94px;font-size:12px;color:#000;font-weight:700;transform:scaleX(0.865);transform-origin:0 0;">Passes</div>
<div style="position:absolute;left:41px;top:103px;width:1px;height:254px;background:repeating-linear-gradient(#6a6a6a 0 1px,transparent 1px 2px)"></div>
<div style="position:absolute;left:41px;top:357px;width:1px;height:174px;background:repeating-linear-gradient(#6a6a6a 0 1px,transparent 1px 2px)"></div>
<div style="position:absolute;left:42px;top:153px;width:9px;height:1px;background:repeating-linear-gradient(90deg,#6a6a6a 0 1px,transparent 1px 2px)"></div>
<div class="t" style="left:53.60px;top:147.34px;font-size:12px;color:#111;font-weight:400;">Conflicts</div>
<div style="position:absolute;left:37px;top:206px;width:9px;height:9px;box-sizing:border-box;border:1px solid #1a1a1a;background:#fff"><div style="position:absolute;left:1px;top:3px;width:5px;height:1px;background:#111"></div></div>
<div style="position:absolute;left:46px;top:210px;width:6px;height:1px;background:repeating-linear-gradient(90deg,#6a6a6a 0 1px,transparent 1px 2px)"></div>
<div class="t" style="left:53.30px;top:204.44px;font-size:12px;color:#000;font-weight:700;transform:scaleX(0.925);transform-origin:0 0;">Australia.Alice Spring</div>
<div style="position:absolute;left:61px;top:216px;width:1px;height:122px;background:repeating-linear-gradient(#6a6a6a 0 1px,transparent 1px 2px)"></div>
<div style="position:absolute;left:3px;top:239px;width:191px;height:1px;background:#ededed;"></div>
<div style="position:absolute;left:62px;top:228px;width:8px;height:1px;background:repeating-linear-gradient(90deg,#6a6a6a 0 1px,transparent 1px 2px)"></div>
<svg width="18" height="18" viewBox="0 0 18 18" style="position:absolute;left:69px;top:219px"><path d="M6 16.3 L16.8 5.6" stroke="#d2d2d2" stroke-width="2"/><path d="M1.9 12.6 L6.8 9.2" stroke="#1f8ae6" stroke-width="2.4"/><path d="M9.8 4.8 L14.4 1.8" stroke="#1f8ae6" stroke-width="2.4"/><path d="M3.6 11.4 L4.1 12.1 M5.3 10.2 L5.8 10.9 M11.4 3.7 L11.9 4.4 M13 2.7 L13.5 3.4" stroke="#0c5aa8" stroke-width="0.6"/><path d="M6.9 8.5 L9.5 6.2 L11.3 8.4 L8.7 10.7 Z" fill="#ece47a" stroke="#b0a850" stroke-width="0.7"/></svg>
<div class="t" style="left:92.60px;top:222.74px;font-size:12px;color:#000;font-weight:400;transform:scaleX(0.870);transform-origin:0 0;">BEIJING 1</div>
<div style="position:absolute;left:3px;top:261px;width:191px;height:1px;background:#ededed;"></div>
<div style="position:absolute;left:62px;top:250px;width:8px;height:1px;background:repeating-linear-gradient(90deg,#6a6a6a 0 1px,transparent 1px 2px)"></div>
<svg width="18" height="18" viewBox="0 0 18 18" style="position:absolute;left:69px;top:241px"><path d="M6 16.3 L16.8 5.6" stroke="#d2d2d2" stroke-width="2"/><path d="M1.9 12.6 L6.8 9.2" stroke="#1f8ae6" stroke-width="2.4"/><path d="M9.8 4.8 L14.4 1.8" stroke="#1f8ae6" stroke-width="2.4"/><path d="M3.6 11.4 L4.1 12.1 M5.3 10.2 L5.8 10.9 M11.4 3.7 L11.9 4.4 M13 2.7 L13.5 3.4" stroke="#0c5aa8" stroke-width="0.6"/><path d="M6.9 8.5 L9.5 6.2 L11.3 8.4 L8.7 10.7 Z" fill="#ece47a" stroke="#b0a850" stroke-width="0.7"/></svg>
<div class="t" style="left:92.60px;top:244.74px;font-size:12px;color:#000;font-weight:400;transform:scaleX(0.927);transform-origin:0 0;">DEIMOS-1</div>
<div style="position:absolute;left:3px;top:283px;width:191px;height:1px;background:#ededed;"></div>
<div style="position:absolute;left:62px;top:272px;width:8px;height:1px;background:repeating-linear-gradient(90deg,#6a6a6a 0 1px,transparent 1px 2px)"></div>
<svg width="18" height="18" viewBox="0 0 18 18" style="position:absolute;left:69px;top:263px"><path d="M6 16.3 L16.8 5.6" stroke="#d2d2d2" stroke-width="2"/><path d="M1.9 12.6 L6.8 9.2" stroke="#1f8ae6" stroke-width="2.4"/><path d="M9.8 4.8 L14.4 1.8" stroke="#1f8ae6" stroke-width="2.4"/><path d="M3.6 11.4 L4.1 12.1 M5.3 10.2 L5.8 10.9 M11.4 3.7 L11.9 4.4 M13 2.7 L13.5 3.4" stroke="#0c5aa8" stroke-width="0.6"/><path d="M6.9 8.5 L9.5 6.2 L11.3 8.4 L8.7 10.7 Z" fill="#ece47a" stroke="#b0a850" stroke-width="0.7"/></svg>
<div class="t" style="left:92.60px;top:266.74px;font-size:12px;color:#000;font-weight:400;transform:scaleX(0.931);transform-origin:0 0;">NIGERIASAT-1</div>
<div style="position:absolute;left:3px;top:305px;width:191px;height:1px;background:#ededed;"></div>
<div style="position:absolute;left:62px;top:294px;width:8px;height:1px;background:repeating-linear-gradient(90deg,#6a6a6a 0 1px,transparent 1px 2px)"></div>
<svg width="18" height="18" viewBox="0 0 18 18" style="position:absolute;left:69px;top:285px"><path d="M6 16.3 L16.8 5.6" stroke="#d2d2d2" stroke-width="2"/><path d="M1.9 12.6 L6.8 9.2" stroke="#1f8ae6" stroke-width="2.4"/><path d="M9.8 4.8 L14.4 1.8" stroke="#1f8ae6" stroke-width="2.4"/><path d="M3.6 11.4 L4.1 12.1 M5.3 10.2 L5.8 10.9 M11.4 3.7 L11.9 4.4 M13 2.7 L13.5 3.4" stroke="#0c5aa8" stroke-width="0.6"/><path d="M6.9 8.5 L9.5 6.2 L11.3 8.4 L8.7 10.7 Z" fill="#ece47a" stroke="#b0a850" stroke-width="0.7"/></svg>
<div class="t" style="left:92.60px;top:288.74px;font-size:12px;color:#000;font-weight:400;transform:scaleX(0.931);transform-origin:0 0;">NIGERIASAT-2</div>
<div style="position:absolute;left:3px;top:327px;width:191px;height:1px;background:#ededed;"></div>
<div style="position:absolute;left:62px;top:316px;width:8px;height:1px;background:repeating-linear-gradient(90deg,#6a6a6a 0 1px,transparent 1px 2px)"></div>
<svg width="18" height="18" viewBox="0 0 18 18" style="position:absolute;left:69px;top:307px"><path d="M6 16.3 L16.8 5.6" stroke="#d2d2d2" stroke-width="2"/><path d="M1.9 12.6 L6.8 9.2" stroke="#1f8ae6" stroke-width="2.4"/><path d="M9.8 4.8 L14.4 1.8" stroke="#1f8ae6" stroke-width="2.4"/><path d="M3.6 11.4 L4.1 12.1 M5.3 10.2 L5.8 10.9 M11.4 3.7 L11.9 4.4 M13 2.7 L13.5 3.4" stroke="#0c5aa8" stroke-width="0.6"/><path d="M6.9 8.5 L9.5 6.2 L11.3 8.4 L8.7 10.7 Z" fill="#ece47a" stroke="#b0a850" stroke-width="0.7"/></svg>
<div class="t" style="left:92.60px;top:310.74px;font-size:12px;color:#000;font-weight:400;transform:scaleX(0.931);transform-origin:0 0;">NIGERIASAT-X</div>
<div style="position:absolute;left:62px;top:338px;width:8px;height:1px;background:repeating-linear-gradient(90deg,#6a6a6a 0 1px,transparent 1px 2px)"></div>
<svg width="18" height="18" viewBox="0 0 18 18" style="position:absolute;left:69px;top:329px"><path d="M6 16.3 L16.8 5.6" stroke="#d2d2d2" stroke-width="2"/><path d="M1.9 12.6 L6.8 9.2" stroke="#1f8ae6" stroke-width="2.4"/><path d="M9.8 4.8 L14.4 1.8" stroke="#1f8ae6" stroke-width="2.4"/><path d="M3.6 11.4 L4.1 12.1 M5.3 10.2 L5.8 10.9 M11.4 3.7 L11.9 4.4 M13 2.7 L13.5 3.4" stroke="#0c5aa8" stroke-width="0.6"/><path d="M6.9 8.5 L9.5 6.2 L11.3 8.4 L8.7 10.7 Z" fill="#ece47a" stroke="#b0a850" stroke-width="0.7"/></svg>
<div class="t" style="left:92.60px;top:332.74px;font-size:12px;color:#000;font-weight:400;transform:scaleX(0.981);transform-origin:0 0;">UK-DMC</div>
<div style="position:absolute;left:37px;top:353px;width:9px;height:9px;box-sizing:border-box;border:1px solid #1a1a1a;background:#fff"><div style="position:absolute;left:1px;top:3px;width:5px;height:1px;background:#111"></div></div>
<div style="position:absolute;left:46px;top:357px;width:6px;height:1px;background:repeating-linear-gradient(90deg,#6a6a6a 0 1px,transparent 1px 2px)"></div>
<div class="t" style="left:53.30px;top:351.44px;font-size:12px;color:#000;font-weight:700;transform:scaleX(0.964);transform-origin:0 0;">Australia.Hobart</div>
<div style="position:absolute;left:61px;top:363px;width:1px;height:122px;background:repeating-linear-gradient(#6a6a6a 0 1px,transparent 1px 2px)"></div>
<div style="position:absolute;left:3px;top:386px;width:191px;height:1px;background:#ededed;"></div>
<div style="position:absolute;left:62px;top:375px;width:8px;height:1px;background:repeating-linear-gradient(90deg,#6a6a6a 0 1px,transparent 1px 2px)"></div>
<svg width="18" height="18" viewBox="0 0 18 18" style="position:absolute;left:69px;top:366px"><path d="M6 16.3 L16.8 5.6" stroke="#d2d2d2" stroke-width="2"/><path d="M1.9 12.6 L6.8 9.2" stroke="#1f8ae6" stroke-width="2.4"/><path d="M9.8 4.8 L14.4 1.8" stroke="#1f8ae6" stroke-width="2.4"/><path d="M3.6 11.4 L4.1 12.1 M5.3 10.2 L5.8 10.9 M11.4 3.7 L11.9 4.4 M13 2.7 L13.5 3.4" stroke="#0c5aa8" stroke-width="0.6"/><path d="M6.9 8.5 L9.5 6.2 L11.3 8.4 L8.7 10.7 Z" fill="#ece47a" stroke="#b0a850" stroke-width="0.7"/></svg>
<div class="t" style="left:92.60px;top:369.74px;font-size:12px;color:#000;font-weight:400;transform:scaleX(0.870);transform-origin:0 0;">BEIJING 1</div>
<div style="position:absolute;left:3px;top:408px;width:191px;height:1px;background:#ededed;"></div>
<div style="position:absolute;left:62px;top:397px;width:8px;height:1px;background:repeating-linear-gradient(90deg,#6a6a6a 0 1px,transparent 1px 2px)"></div>
<svg width="18" height="18" viewBox="0 0 18 18" style="position:absolute;left:69px;top:388px"><path d="M6 16.3 L16.8 5.6" stroke="#d2d2d2" stroke-width="2"/><path d="M1.9 12.6 L6.8 9.2" stroke="#1f8ae6" stroke-width="2.4"/><path d="M9.8 4.8 L14.4 1.8" stroke="#1f8ae6" stroke-width="2.4"/><path d="M3.6 11.4 L4.1 12.1 M5.3 10.2 L5.8 10.9 M11.4 3.7 L11.9 4.4 M13 2.7 L13.5 3.4" stroke="#0c5aa8" stroke-width="0.6"/><path d="M6.9 8.5 L9.5 6.2 L11.3 8.4 L8.7 10.7 Z" fill="#ece47a" stroke="#b0a850" stroke-width="0.7"/></svg>
<div class="t" style="left:92.60px;top:391.74px;font-size:12px;color:#000;font-weight:400;transform:scaleX(0.927);transform-origin:0 0;">DEIMOS-1</div>
<div style="position:absolute;left:3px;top:430px;width:191px;height:1px;background:#ededed;"></div>
<div style="position:absolute;left:62px;top:419px;width:8px;height:1px;background:repeating-linear-gradient(90deg,#6a6a6a 0 1px,transparent 1px 2px)"></div>
<svg width="18" height="18" viewBox="0 0 18 18" style="position:absolute;left:69px;top:410px"><path d="M6 16.3 L16.8 5.6" stroke="#d2d2d2" stroke-width="2"/><path d="M1.9 12.6 L6.8 9.2" stroke="#1f8ae6" stroke-width="2.4"/><path d="M9.8 4.8 L14.4 1.8" stroke="#1f8ae6" stroke-width="2.4"/><path d="M3.6 11.4 L4.1 12.1 M5.3 10.2 L5.8 10.9 M11.4 3.7 L11.9 4.4 M13 2.7 L13.5 3.4" stroke="#0c5aa8" stroke-width="0.6"/><path d="M6.9 8.5 L9.5 6.2 L11.3 8.4 L8.7 10.7 Z" fill="#ece47a" stroke="#b0a850" stroke-width="0.7"/></svg>
<div class="t" style="left:92.60px;top:413.74px;font-size:12px;color:#000;font-weight:400;transform:scaleX(0.931);transform-origin:0 0;">NIGERIASAT-1</div>
<div style="position:absolute;left:3px;top:452px;width:191px;height:1px;background:#ededed;"></div>
<div style="position:absolute;left:62px;top:441px;width:8px;height:1px;background:repeating-linear-gradient(90deg,#6a6a6a 0 1px,transparent 1px 2px)"></div>
<svg width="18" height="18" viewBox="0 0 18 18" style="position:absolute;left:69px;top:432px"><path d="M6 16.3 L16.8 5.6" stroke="#d2d2d2" stroke-width="2"/><path d="M1.9 12.6 L6.8 9.2" stroke="#1f8ae6" stroke-width="2.4"/><path d="M9.8 4.8 L14.4 1.8" stroke="#1f8ae6" stroke-width="2.4"/><path d="M3.6 11.4 L4.1 12.1 M5.3 10.2 L5.8 10.9 M11.4 3.7 L11.9 4.4 M13 2.7 L13.5 3.4" stroke="#0c5aa8" stroke-width="0.6"/><path d="M6.9 8.5 L9.5 6.2 L11.3 8.4 L8.7 10.7 Z" fill="#ece47a" stroke="#b0a850" stroke-width="0.7"/></svg>
<div class="t" style="left:92.60px;top:435.74px;font-size:12px;color:#000;font-weight:400;transform:scaleX(0.931);transform-origin:0 0;">NIGERIASAT-2</div>
<div style="position:absolute;left:3px;top:474px;width:191px;height:1px;background:#ededed;"></div>
<div style="position:absolute;left:62px;top:463px;width:8px;height:1px;background:repeating-linear-gradient(90deg,#6a6a6a 0 1px,transparent 1px 2px)"></div>
<svg width="18" height="18" viewBox="0 0 18 18" style="position:absolute;left:69px;top:454px"><path d="M6 16.3 L16.8 5.6" stroke="#d2d2d2" stroke-width="2"/><path d="M1.9 12.6 L6.8 9.2" stroke="#1f8ae6" stroke-width="2.4"/><path d="M9.8 4.8 L14.4 1.8" stroke="#1f8ae6" stroke-width="2.4"/><path d="M3.6 11.4 L4.1 12.1 M5.3 10.2 L5.8 10.9 M11.4 3.7 L11.9 4.4 M13 2.7 L13.5 3.4" stroke="#0c5aa8" stroke-width="0.6"/><path d="M6.9 8.5 L9.5 6.2 L11.3 8.4 L8.7 10.7 Z" fill="#ece47a" stroke="#b0a850" stroke-width="0.7"/></svg>
<div class="t" style="left:92.60px;top:457.74px;font-size:12px;color:#000;font-weight:400;transform:scaleX(0.931);transform-origin:0 0;">NIGERIASAT-X</div>
<div style="position:absolute;left:62px;top:485px;width:8px;height:1px;background:repeating-linear-gradient(90deg,#6a6a6a 0 1px,transparent 1px 2px)"></div>
<svg width="18" height="18" viewBox="0 0 18 18" style="position:absolute;left:69px;top:476px"><path d="M6 16.3 L16.8 5.6" stroke="#d2d2d2" stroke-width="2"/><path d="M1.9 12.6 L6.8 9.2" stroke="#1f8ae6" stroke-width="2.4"/><path d="M9.8 4.8 L14.4 1.8" stroke="#1f8ae6" stroke-width="2.4"/><path d="M3.6 11.4 L4.1 12.1 M5.3 10.2 L5.8 10.9 M11.4 3.7 L11.9 4.4 M13 2.7 L13.5 3.4" stroke="#0c5aa8" stroke-width="0.6"/><path d="M6.9 8.5 L9.5 6.2 L11.3 8.4 L8.7 10.7 Z" fill="#ece47a" stroke="#b0a850" stroke-width="0.7"/></svg>
<div class="t" style="left:92.60px;top:479.74px;font-size:12px;color:#000;font-weight:400;transform:scaleX(0.981);transform-origin:0 0;">UK-DMC</div>
<div style="position:absolute;left:37px;top:500px;width:9px;height:9px;box-sizing:border-box;border:1px solid #1a1a1a;background:#fff"><div style="position:absolute;left:1px;top:3px;width:5px;height:1px;background:#111"></div></div>
<div style="position:absolute;left:46px;top:504px;width:6px;height:1px;background:repeating-linear-gradient(90deg,#6a6a6a 0 1px,transparent 1px 2px)"></div>
<div class="t" style="left:53.30px;top:498.44px;font-size:12px;color:#000;font-weight:700;transform:scaleX(0.951);transform-origin:0 0;">Australia.Perth</div>
<div style="position:absolute;left:61px;top:510px;width:1px;height:21px;background:repeating-linear-gradient(#6a6a6a 0 1px,transparent 1px 2px)"></div>
<div style="position:absolute;left:62px;top:522px;width:8px;height:1px;background:repeating-linear-gradient(90deg,#6a6a6a 0 1px,transparent 1px 2px)"></div>
<svg width="18" height="18" viewBox="0 0 18 18" style="position:absolute;left:69px;top:513px"><path d="M6 16.3 L16.8 5.6" stroke="#d2d2d2" stroke-width="2"/><path d="M1.9 12.6 L6.8 9.2" stroke="#1f8ae6" stroke-width="2.4"/><path d="M9.8 4.8 L14.4 1.8" stroke="#1f8ae6" stroke-width="2.4"/><path d="M3.6 11.4 L4.1 12.1 M5.3 10.2 L5.8 10.9 M11.4 3.7 L11.9 4.4 M13 2.7 L13.5 3.4" stroke="#0c5aa8" stroke-width="0.6"/><path d="M6.9 8.5 L9.5 6.2 L11.3 8.4 L8.7 10.7 Z" fill="#ece47a" stroke="#b0a850" stroke-width="0.7"/></svg>
<div class="t" style="left:92.60px;top:516.74px;font-size:12px;color:#000;font-weight:400;transform:scaleX(0.870);transform-origin:0 0;">BEIJING 1</div>
<svg width="1156" height="534" style="pointer-events:none">
<path d="M197.5 197.5 L197.5 197.5 L197.5 183.5 L199.5 183.5 L199.5 197.5 Z M203.5 197.5 L203.5 197.5 L203.5 183.5 L209.5 183.5 L209.5 197.5 Z M215.5 197.5 L215.5 197.5 L215.5 183.5 L218.5 183.5 L218.5 197.5 Z M226.5 197.5 L226.5 197.5 L226.5 170.5 L228.5 170.5 L228.5 144.5 L230.5 144.5 L230.5 170.5 L232.5 170.5 L232.5 183.5 L235.5 183.5 L235.5 197.5 Z M237.5 197.5 L237.5 197.5 L237.5 183.5 L245.5 183.5 L245.5 197.5 Z M248.5 197.5 L248.5 197.5 L248.5 183.5 L250.5 183.5 L250.5 170.5 L252.5 170.5 L252.5 157.5 L258.5 157.5 L258.5 183.5 L265.5 183.5 L265.5 197.5 Z M277.5 197.5 L277.5 197.5 L277.5 183.5 L279.5 183.5 L279.5 197.5 Z M287.5 197.5 L287.5 197.5 L287.5 183.5 L288.5 183.5 L288.5 170.5 L290.5 170.5 L290.5 183.5 L291.5 183.5 L291.5 197.5 Z M303.5 197.5 L303.5 197.5 L303.5 183.5 L308.5 183.5 L308.5 197.5 Z M312.5 197.5 L312.5 197.5 L312.5 183.5 L314.5 183.5 L314.5 170.5 L316.5 170.5 L316.5 183.5 L321.5 183.5 L321.5 197.5 Z M338.5 197.5 L338.5 197.5 L338.5 183.5 L355.5 183.5 L355.5 197.5 Z M367.5 197.5 L367.5 197.5 L367.5 183.5 L369.5 183.5 L369.5 197.5 Z M405.5 197.5 L405.5 197.5 L405.5 183.5 L407.5 183.5 L407.5 197.5 Z M411.5 197.5 L411.5 197.5 L411.5 183.5 L413.5 183.5 L413.5 197.5 Z M511.5 197.5 L511.5 197.5 L511.5 144.5 L513.5 144.5 L513.5 170.5 L516.5 170.5 L516.5 183.5 L517.5 183.5 L517.5 197.5 Z M556.5 197.5 L556.5 197.5 L556.5 183.5 L559.5 183.5 L559.5 197.5 Z M572.5 197.5 L572.5 197.5 L572.5 183.5 L573.5 183.5 L573.5 170.5 L581.5 170.5 L581.5 197.5 Z M607.5 197.5 L607.5 197.5 L607.5 183.5 L612.5 183.5 L612.5 197.5 Z M619.5 197.5 L619.5 197.5 L619.5 183.5 L624.5 183.5 L624.5 197.5 Z M638.5 197.5 L638.5 197.5 L638.5 183.5 L640.5 183.5 L640.5 170.5 L643.5 170.5 L643.5 183.5 L645.5 183.5 L645.5 197.5 Z M651.5 197.5 L651.5 197.5 L651.5 183.5 L656.5 183.5 L656.5 197.5 Z M668.5 197.5 L668.5 197.5 L668.5 183.5 L671.5 183.5 L671.5 170.5 L673.5 170.5 L673.5 183.5 L683.5 183.5 L683.5 197.5 Z M694.5 197.5 L694.5 197.5 L694.5 183.5 L697.5 183.5 L697.5 197.5 Z M705.5 197.5 L705.5 197.5 L705.5 183.5 L709.5 183.5 L709.5 197.5 Z M729.5 197.5 L729.5 197.5 L729.5 183.5 L730.5 183.5 L730.5 170.5 L733.5 170.5 L733.5 183.5 L735.5 183.5 L735.5 197.5 Z M737.5 197.5 L737.5 197.5 L737.5 183.5 L739.5 183.5 L739.5 197.5 Z M741.5 197.5 L741.5 197.5 L741.5 183.5 L746.5 183.5 L746.5 197.5 Z M756.5 197.5 L756.5 197.5 L756.5 183.5 L757.5 183.5 L757.5 170.5 L762.5 170.5 L762.5 183.5 L764.5 183.5 L764.5 197.5 Z M768.5 197.5 L768.5 197.5 L768.5 183.5 L770.5 183.5 L770.5 170.5 L774.5 170.5 L774.5 183.5 L776.5 183.5 L776.5 197.5 Z M789.5 197.5 L789.5 197.5 L789.5 183.5 L792.5 183.5 L792.5 170.5 L797.5 170.5 L797.5 183.5 L799.5 183.5 L799.5 197.5 Z M811.5 197.5 L811.5 197.5 L811.5 183.5 L814.5 183.5 L814.5 197.5 Z M822.5 197.5 L822.5 197.5 L822.5 170.5 L824.5 170.5 L824.5 183.5 L825.5 183.5 L825.5 197.5 Z M832.5 197.5 L832.5 197.5 L832.5 170.5 L837.5 170.5 L837.5 183.5 L839.5 183.5 L839.5 197.5 Z M872.5 197.5 L872.5 197.5 L872.5 183.5 L879.5 183.5 L879.5 197.5 Z M896.5 197.5 L896.5 197.5 L896.5 183.5 L902.5 183.5 L902.5 197.5 Z M988.5 197.5 L988.5 197.5 L988.5 183.5 L989.5 183.5 L989.5 170.5 L993.5 170.5 L993.5 197.5 Z M1049.5 197.5 L1049.5 197.5 L1049.5 183.5 L1050.5 183.5 L1050.5 170.5 L1055.5 170.5 L1055.5 197.5 Z M1083.5 197.5 L1083.5 197.5 L1083.5 183.5 L1088.5 183.5 L1088.5 197.5 Z M1111.5 197.5 L1111.5 197.5 L1111.5 183.5 L1113.5 183.5 L1113.5 170.5 L1119.5 170.5 L1119.5 183.5 L1120.5 183.5 L1120.5 197.5 Z M1128.5 197.5 L1128.5 197.5 L1128.5 183.5 L1130.5 183.5 L1130.5 197.5 Z" fill="#f9aa7f" stroke="#3a3a3a" stroke-width="1"/>
<rect x="216" y="183.0" width="1" height="14.5" fill="#333"/>
<rect x="220" y="183.0" width="1" height="14.5" fill="#333"/>
<rect x="231" y="157.0" width="1" height="13.5" fill="#333"/>
<rect x="242" y="170.0" width="1" height="13.5" fill="#333"/>
<rect x="249" y="183.0" width="1" height="14.5" fill="#333"/>
<rect x="254" y="131.0" width="1" height="26.5" fill="#333"/>
<rect x="255" y="144.0" width="1" height="13.5" fill="#333"/>
<rect x="256" y="144.0" width="1" height="13.5" fill="#333"/>
<rect x="258" y="144.0" width="1" height="39.5" fill="#333"/>
<rect x="260" y="157.0" width="1" height="26.5" fill="#333"/>
<rect x="263" y="170.0" width="1" height="13.5" fill="#333"/>
<rect x="319" y="183.0" width="1" height="14.5" fill="#333"/>
<rect x="346" y="170.0" width="2" height="13.5" fill="#333"/>
<rect x="350" y="183.0" width="1" height="14.5" fill="#333"/>
<rect x="476" y="183.0" width="1" height="14.5" fill="#333"/>
<rect x="512" y="118.0" width="1" height="26.5" fill="#333"/>
<rect x="575" y="144.0" width="2" height="26.5" fill="#333"/>
<rect x="583" y="183.0" width="1" height="14.5" fill="#333"/>
<rect x="609" y="157.0" width="1" height="26.5" fill="#333"/>
<rect x="652" y="183.0" width="2" height="14.5" fill="#333"/>
<rect x="669" y="170.0" width="2" height="13.5" fill="#333"/>
<rect x="678" y="170.0" width="2" height="13.5" fill="#333"/>
<rect x="701" y="183.0" width="2" height="14.5" fill="#333"/>
<rect x="732" y="157.0" width="1" height="13.5" fill="#333"/>
<rect x="738" y="170.0" width="2" height="13.5" fill="#333"/>
<rect x="760" y="157.0" width="1" height="13.5" fill="#333"/>
<rect x="763" y="170.0" width="1" height="13.5" fill="#333"/>
<rect x="775" y="183.0" width="2" height="14.5" fill="#333"/>
<rect x="794" y="170.0" width="1" height="27.5" fill="#333"/>
<rect x="796" y="170.0" width="1" height="27.5" fill="#333"/>
<rect x="1053" y="144.0" width="2" height="26.5" fill="#333"/>
<rect x="1112" y="170.0" width="1" height="13.5" fill="#333"/>
<rect x="1113" y="183.0" width="2" height="14.5" fill="#333"/>
<rect x="192" y="118" width="1" height="80" fill="#7a7a7a"/>
<rect x="190" y="118" width="2" height="1" fill="#7a7a7a"/>
<rect x="189" y="197" width="942" height="1" fill="#3a3a3a"/>
</svg>
<div class="t" style="left:180.60px;top:113.44px;font-size:12px;color:#111;font-weight:400;transform:scaleX(0.950);transform-origin:0 0;">6</div>
<div class="t" style="left:180.60px;top:191.94px;font-size:12px;color:#111;font-weight:400;transform:scaleX(0.950);transform-origin:0 0;">0</div>
<div class="t" style="left:25.40px;top:6.46px;font-size:11.2px;color:#0a0a50;font-weight:400;transform:scaleX(0.920);transform-origin:0 0;">Map</div>
<div class="t" style="left:74.00px;top:7.08px;font-size:11.4px;color:#000;font-weight:700;transform:scaleX(1.030);transform-origin:0 0;">Gantt</div>
<div class="t" style="left:150.40px;top:6.46px;font-size:11.2px;color:#0a0a50;font-weight:400;transform:scaleX(0.975);transform-origin:0 0;">Report</div>
<svg width="1156" height="534" style="pointer-events:none">
<path d="M14.3 4.8 L22.6 4.8 L15.8 19.3 L7.3 19.3 Z" fill="#24f0b4" stroke="#222" stroke-width="1.1"/>
<path d="M11.8 9.5 L20.3 9.5 M9.5 14.4 L18 14.4" stroke="#2a2a2a" stroke-width="0.9" stroke-dasharray="1.1 0.9"/>
<path d="M11.8 10.5 L20 10.5 M9.2 15.4 L17.6 15.4" stroke="#bff" stroke-width="0.6"/>
<rect x="56.6" y="5.6" width="11" height="2.1" fill="#30c8c8" stroke="#111" stroke-width="1.1"/>
<rect x="56.6" y="9.4" width="8" height="2.1" fill="#f0e830" stroke="#111" stroke-width="1.1"/>
<rect x="59.6" y="13.4" width="6.3" height="2.1" fill="#fafafa" stroke="#111" stroke-width="1.1"/>
<rect x="56.6" y="17.4" width="13" height="2.1" fill="#20b050" stroke="#111" stroke-width="1.1"/>
<path d="M113.6 8.2 L120.4 14.8 M120.4 8.2 L113.6 14.8" stroke="#111" stroke-width="1.7"/>
<rect x="133.5" y="6.5" width="13" height="11" fill="#e6edf5" stroke="#8a97a8" stroke-width="1"/>
<path d="M133.5 9.5 H146.5 M133.5 12.5 H146.5 M133.5 15 H146.5 M137 6.5 V17.5 M140 6.5 V17.5 M143.3 6.5 V17.5" stroke="#a9b6c6" stroke-width="0.8"/>
<path d="M1143.5 9.8 L1152.3 9.8 L1148.6 14 L1147.2 14 Z" fill="#000"/>
<rect x="94" y="29" width="1" height="14" fill="#c4c4c4"/>
<rect x="187" y="29" width="1" height="14" fill="#c4c4c4"/>
<rect x="327" y="29" width="1" height="14" fill="#c4c4c4"/>
<rect x="470" y="29" width="1" height="14" fill="#c4c4c4"/>
<rect x="536" y="29" width="1" height="14" fill="#c4c4c4"/>
<rect x="608" y="29" width="1" height="14" fill="#c4c4c4"/>
<path d="M8 31.5 L12 31.5 L13.5 30 L18 30 L19 32 L21.5 32 L21.5 41.5 L9 41.5 Z" fill="#f2d88a" stroke="#b58f3c" stroke-width="1"/>
<path d="M7.5 35 L20 35 L23 36 L20.5 42.5 L9.5 42.5 Z" fill="#f7e3a0" stroke="#b58f3c" stroke-width="1"/>
<rect x="29.5" y="28.5" width="15" height="14.5" rx="1.5" fill="#2a2a2a" stroke="#111" stroke-width="1"/>
<rect x="31.5" y="29.5" width="11" height="6" fill="#f4f8fc"/>
<rect x="31.5" y="34" width="11" height="1.6" fill="#3d8fd8"/>
<rect x="33" y="37.5" width="8" height="5" fill="#b8b8b8"/>
<rect x="34" y="38.5" width="1.6" height="3" fill="#222"/>
<rect x="55" y="28.5" width="8" height="4.5" fill="#fff" stroke="#6a7e96" stroke-width="1"/>
<rect x="51.5" y="32.5" width="15" height="7.5" rx="1" fill="#b9bdc2" stroke="#6d7378" stroke-width="1"/>
<rect x="59" y="35" width="4" height="1.2" fill="#4a9be0"/>
<rect x="55" y="38.5" width="8" height="5" fill="#fff" stroke="#6a7e96" stroke-width="1"/>
<rect x="58.5" y="40.5" width="1.2" height="1.2" fill="#3a7bd0"/>
<rect x="73.5" y="30.5" width="12" height="11" fill="#f3faf3" stroke="#2f9a3a" stroke-width="1.1"/>
<path d="M76.5 33 L82.5 40 M82.5 33 L76.5 40" stroke="#1e8a2a" stroke-width="2"/>
<path d="M86 32 L89.5 36 L86 40 Z" fill="#2a6fd6"/>
<rect x="101.5" y="36.5" width="10" height="3.8" fill="#f26a10" stroke="#444" stroke-width="0.6"/>
<rect x="105.5" y="39.6" width="11.5" height="3.8" fill="#f8e81a" stroke="#333" stroke-width="0.8"/>
<path d="M107.8 37.2 L115.2 29.6" stroke="#333" stroke-width="4"/>
<path d="M107.8 37.2 L115.2 29.6" stroke="#f1d060" stroke-width="2.4"/>
<path d="M114.6 30.2 L116.4 28.4" stroke="#e04040" stroke-width="2.8"/>
<path d="M145 39.5 L146 32.5 L148.5 35 C152 32 157 33 159.5 39.5 C156 36.5 152 36 150 37 L152.5 39.5 Z" fill="#c6c6c6"/>
<path d="M181 39.5 L180 32.5 L177.5 35 C174 32 169 33 166.5 39.5 C170 36.5 174 36 176 37 L173.5 39.5 Z" fill="#c6c6c6"/>
<path d="M206.2 39.8 A6.4 6.4 0 1 1 201.5 28.7" fill="none" stroke="#222" stroke-width="1.3"/>
<path d="M203.5 29.2 A6.4 6.4 0 0 1 207.9 35.1" fill="none" stroke="#444" stroke-width="1.1" stroke-dasharray="1.3 1.2"/>
<path d="M206.5 40 L209.5 43.3" stroke="#111" stroke-width="2.2"/>
<path d="M199 30.5 L203.6 31.2 L199.7 35 Z" fill="#777"/>
<path d="M200.5 32.5 L205.5 30" stroke="#444" stroke-width="1"/>
<circle cx="223.1" cy="35" r="6.4" fill="#fff" stroke="#222" stroke-width="1.3"/>
<path d="M227.7 39.8 L231.3 43.5" stroke="#111" stroke-width="2.2"/>
<path d="M219.8 35 H226.4 M223.1 31.7 V38.3" stroke="#111" stroke-width="1.8"/>
<circle cx="244.9" cy="35" r="6.4" fill="#fff" stroke="#222" stroke-width="1.3"/>
<path d="M249.5 39.8 L253.1 43.5" stroke="#111" stroke-width="2.2"/>
<path d="M241.6 35 H248.2" stroke="#111" stroke-width="1.8"/>
<rect x="261.5" y="29.5" width="13" height="12" rx="1.5" fill="#fff" stroke="#3a3a3a" stroke-width="1"/>
<path d="M263.5 31.5 H272.5 M263.5 33.4 H272.5 M263.5 35.3 H272.5 M263.5 37.2 H272.5 M263.5 39.2 H272.5" stroke="#444" stroke-width="0.9"/>
<rect x="334.5" y="29.5" width="15" height="13" fill="none" stroke="#c8c8c8" stroke-width="1"/>
<rect x="335" y="30" width="14" height="2" fill="#cfcfcf"/>
<path d="M334.5 35.5 H338.5 M345.5 35.5 H349.5 M334.5 38.5 H337 M347 38.5 H349.5" stroke="#c8c8c8" stroke-width="1"/>
<path d="M340.5 33.5 V37.5 H338.5 L342 41 L345.5 37.5 H343.5 V33.5 Z" fill="none" stroke="#c4c4c4" stroke-width="0.9"/>
<path d="M357.5 32.3 H362.5 M360 29.8 V34.8" stroke="#222" stroke-width="1.1"/>
<rect x="361.5" y="34.5" width="10" height="3" fill="#fff" stroke="#222" stroke-width="1"/>
<path d="M357.5 38.5 V41.5 H371.5 V38.5" fill="none" stroke="#333" stroke-width="1"/>
<path d="M360.5 39 V41 M363.5 39 V41 M366.5 39 V41 M369 39 V41" stroke="#e06a30" stroke-width="0.9"/>
<path d="M380.5 30.5 L391 42 M391 30.5 L380.5 42" stroke="#111" stroke-width="1.8"/>
<path d="M401 43 L408 35 M403.5 42.5 L409.5 36.5 M406 43 L411 38" stroke="#e08050" stroke-width="0.8" stroke-dasharray="1.6 1"/>
<path d="M407.5 35.5 L414.5 29.5" stroke="#333" stroke-width="2.2"/>
<path d="M407.5 35.5 L414.5 29.5" stroke="#ddd" stroke-width="1"/>
<path d="M408 29.5 L416 36.5" stroke="#5030c0" stroke-width="1"/>
<path d="M478.5 30.5 H492 L486.5 36.5 V42 L484 42 V36.5 Z" fill="#888" stroke="#333" stroke-width="1"/>
<path d="M480.5 31.5 H490" stroke="#eee" stroke-width="0.8"/>
<path d="M525 35 L531 35 L528 38 Z" fill="#111"/>
<circle cx="551.5" cy="35.5" r="4.3" fill="none" stroke="#111" stroke-width="1.2"/>
<path d="M544 35.5 H559 M551.5 28.5 V43" stroke="#111" stroke-width="1.2"/>
<rect x="566.5" y="33.5" width="13" height="4.5" fill="#f8f3b0" stroke="#555" stroke-width="1"/>
<path d="M570.5 31.5 L573 29.5 L575.5 31.5 M570.5 40 L573 42 L575.5 40" stroke="#888" stroke-width="0.8" fill="none"/>
<rect x="588.5" y="34.5" width="13" height="3" fill="#f8f3b0" stroke="#666" stroke-width="1"/>
<path d="M592.5 29.5 L595 31.8 L597.5 29.5 M592.5 42 L595 39.8 L597.5 42" stroke="#888" stroke-width="0.8" fill="none"/>
<defs><radialGradient id="gl" cx="0.4" cy="0.35" r="0.75"><stop offset="0" stop-color="#7ad070"/><stop offset="0.6" stop-color="#3a9a3a"/><stop offset="1" stop-color="#1f5a30"/></radialGradient><linearGradient id="gb" x1="0" y1="0" x2="0" y2="1"><stop offset="0" stop-color="#8cc8f4"/><stop offset="1" stop-color="#1f5fc8"/></linearGradient></defs>
<circle cx="622.9" cy="35.9" r="7.9" fill="url(#gl)"/>
<path d="M620.5 28.3 C623 28 625 29 625.2 31 C624.5 34 623 37 622.5 40 C621.5 42 620.5 43 619.5 43.2 C618 41 617.5 39.5 619 38 C616 37 615.5 35.5 616 34 C618 33.5 619.5 31 620.5 28.3 Z" fill="url(#gb)"/>
<circle cx="626.6" cy="39.9" r="3.8" fill="#f2f2f2" stroke="#808080" stroke-width="0.9"/>
<path d="M625.3 41.3 L627.8 38.6" stroke="#555" stroke-width="0.7"/>
</svg>
<div class="t" style="left:117.50px;top:31.17px;font-size:11.3px;color:#0c0c30;font-weight:400;transform:scaleX(0.950);transform-origin:0 0;">Edit</div>
<div class="t" style="left:633.00px;top:31.17px;font-size:11.3px;color:#0c0c30;font-weight:400;transform:scaleX(0.893);transform-origin:0 0;">Time Zone</div>
<div class="t" style="left:277.10px;top:31.17px;font-size:11.3px;color:#0c0c30;font-weight:400;transform:scaleX(0.990);transform-origin:0 0;">Fit Width</div>
<div class="t" style="left:416.50px;top:31.17px;font-size:11.3px;color:#0c0c30;font-weight:400;transform:scaleX(0.975);transform-origin:0 0;">Hot Track</div>
<div class="t" style="left:494.20px;top:31.17px;font-size:11.3px;color:#0c0c30;font-weight:400;transform:scaleX(0.986);transform-origin:0 0;">Filter</div>
<div style="position:absolute;left:1136px;top:86px;width:16px;height:445px;background:linear-gradient(90deg,#e6e6e6,#f1f1f1 30%,#f1f1f1 70%,#e9e9e9);"></div>
<div style="position:absolute;left:1137px;top:105px;width:15px;height:95px;box-sizing:border-box;border:1px solid #b4b4b4;border-radius:2px;background:linear-gradient(90deg,#f4f4f4,#e0e0e0 50%,#d2d2d2);"></div>
<svg width="1156" height="534" style="pointer-events:none">
<path d="M1140.5 99.5 L1144.5 95.5 L1148.5 99.5 Z" fill="#404040"/>
<path d="M1140.5 521.5 L1148.5 521.5 L1144.5 525.5 Z" fill="#404040"/>
<path d="M1141.5 149.5 H1147.5 M1141.5 152.5 H1147.5 M1141.5 155.5 H1147.5" stroke="#555" stroke-width="1"/>
</svg>
<div style="position:absolute;left:0px;top:50px;width:2px;height:482px;background:#b4b4b4;"></div>
<div style="position:absolute;left:1px;top:50px;width:1px;height:482px;background:#7a7a7a;"></div>
<div style="position:absolute;left:2px;top:50px;width:1152px;height:2px;background:#111;"></div>
<div style="position:absolute;left:2px;top:50px;width:1px;height:482px;background:#111;"></div>
<div style="position:absolute;left:1152px;top:50px;width:2px;height:482px;background:#111;"></div>
<div style="position:absolute;left:2px;top:530px;width:1152px;height:2px;background:#111;"></div>
<div style="position:absolute;left:0px;top:532px;width:1156px;height:2px;background:#efefef;"></div>
</body></html>
